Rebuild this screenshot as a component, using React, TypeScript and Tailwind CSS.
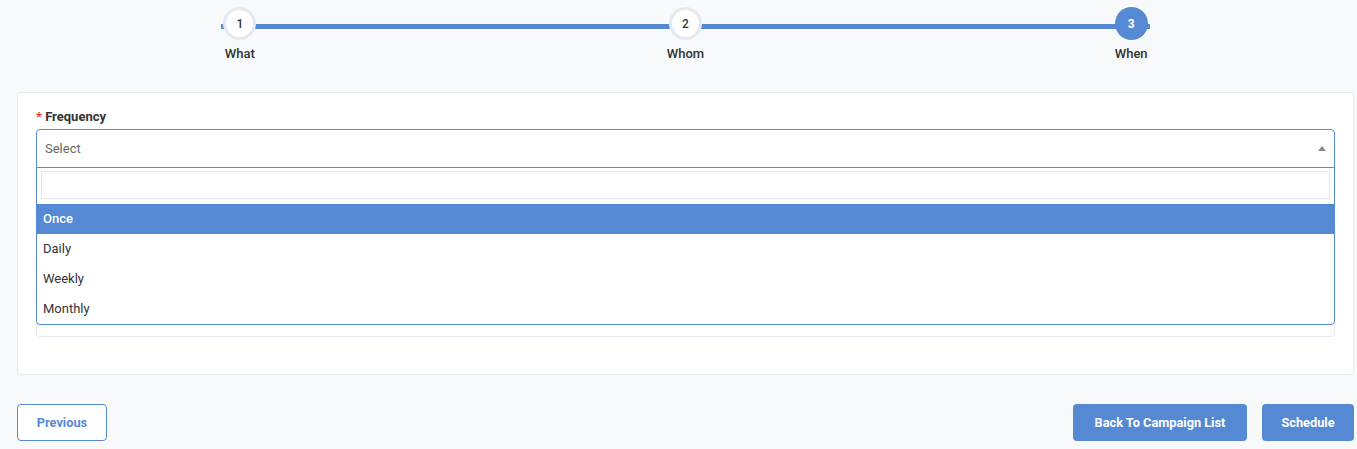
import React from "react";

const steps = [
  { n: 1, label: "What" },
  { n: 2, label: "Whom" },
  { n: 3, label: "When" },
];

const options = ["Once", "Daily", "Weekly", "Monthly"];

function Stepper({ current }: { current: number }) {
  return (
    <div className="relative grid grid-cols-3 pt-[7px]">
      <div className="absolute left-[204px] right-[204px] top-[24px] h-[5px] bg-[#5589d4]" />
      {steps.map((s) => (
        <div key={s.n} className="relative flex flex-col items-center">
          {s.n === current ? (
            <div className="flex h-[33px] w-[33px] items-center justify-center rounded-full bg-[#5589d4] text-[12px] font-bold text-white">
              {s.n}
            </div>
          ) : (
            <div className="flex h-[33px] w-[33px] items-center justify-center rounded-full border-[3px] border-[#e3eaf5] bg-white text-[12px] font-medium text-[#333]">
              {s.n}
            </div>
          )}
          <span className="mt-[6px] text-[13px] font-medium leading-4 text-[#333]">
            {s.label}
          </span>
        </div>
      ))}
    </div>
  );
}

export default function App() {
  return (
    <div
      className="min-h-[449px] bg-[#f8f9fb] pl-[17px] pr-[3px]"
      style={{ fontFamily: "Roboto, 'Noto Sans', sans-serif" }}
    >
      <Stepper current={3} />

      <div className="mt-[30px] rounded border border-[#e6eaf0] bg-white px-[18px] pb-[37px] pt-[16px]">
        <label className="block text-[13px] font-bold leading-4 text-[#333]">
          <span className="text-[#e53935]">*</span> Frequency
        </label>
        <div className="relative mt-[4px]">
          <div className="flex h-[39px] items-center justify-between rounded-t border border-[#5589d4] bg-white pl-[8px] pr-[8px] text-[13px] text-[#666]">
            <span>Select</span>
            <svg width="8" height="5" viewBox="0 0 8 5">
              <path d="M0 5 L4 0 L8 5 Z" fill="#888" />
            </svg>
          </div>
          <div className="mt-[9px] h-[160px] rounded border border-[#e6eaf0]" />

          {/* open dropdown */}
          <div className="absolute left-0 right-0 top-[38px] z-10 rounded-b border border-[#5589d4] bg-white">
            <div className="px-[4px] pb-[5px] pt-[3px]">
              <div className="h-[28px] border border-[#e3e8f0]" />
            </div>
            {options.map((o, i) => (
              <div
                key={o}
                className={
                  i === 0
                    ? "flex h-[30px] items-center bg-[#5589d4] px-[6px] text-[13px] font-medium text-white"
                    : "flex h-[30px] items-center px-[6px] text-[13px] text-[#333]"
                }
              >
                {o}
              </div>
            ))}
          </div>
        </div>
      </div>

      <div className="mt-[29px] flex items-center justify-between">
        <button className="h-[37px] w-[90px] rounded border border-[#5589d4] bg-white text-[12.75px] font-bold text-[#5589d4]">
          Previous
        </button>
        <div className="flex gap-[15px]">
          <button className="h-[37px] w-[174px] rounded bg-[#5589d4] text-[12.75px] font-bold text-white">
            Back To Campaign List
          </button>
          <button className="h-[37px] w-[92px] rounded bg-[#5589d4] text-[12.75px] font-bold text-white">
            Schedule
          </button>
        </div>
      </div>
    </div>
  );
}
